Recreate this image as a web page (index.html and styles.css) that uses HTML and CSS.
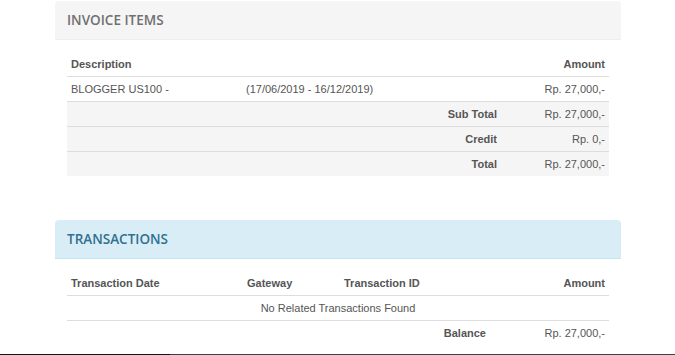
FILE: index.html
```html
<!DOCTYPE html>
<html lang="en">

<head>
    <meta charset="UTF-8">
    <meta name="viewport" content="width=device-width, initial-scale=1.0">
    <title>Invoice</title>

    <link rel="stylesheet" href="styles.css">

</head>

<body>
    <main class="invoice">
        <div class="panel">
            <div class="panel-heading">
                <h3 class="panel-title">Invoice Items</h3>
            </div>
            <div class="panel-body">
                <table class="items">
                    <colgroup>
                        <col class="col-desc">
                        <col class="col-period">
                        <col class="col-amount">
                    </colgroup>
                    <thead>
                        <tr>
                            <th>Description</th>
                            <th></th>
                            <th class="right">Amount</th>
                        </tr>
                    </thead>
                    <tbody>
                        <tr>
                            <td>BLOGGER US100 -</td>
                            <td>(17/06/2019 - 16/12/2019)</td>
                            <td class="right">Rp. 27,000,-</td>
                        </tr>
                        <tr class="summary">
                            <td colspan="2" class="right label">Sub Total</td>
                            <td class="right">Rp. 27,000,-</td>
                        </tr>
                        <tr class="summary">
                            <td colspan="2" class="right label">Credit</td>
                            <td class="right">Rp. 0,-</td>
                        </tr>
                        <tr class="summary">
                            <td colspan="2" class="right label">Total</td>
                            <td class="right">Rp. 27,000,-</td>
                        </tr>
                    </tbody>
                </table>
            </div>
        </div>

        <div class="panel panel-info">
            <div class="panel-heading">
                <h3 class="panel-title">Transactions</h3>
            </div>
            <div class="panel-body">
                <table class="transactions">
                    <colgroup>
                        <col class="col-date">
                        <col class="col-gateway">
                        <col class="col-txid">
                        <col class="col-amount">
                    </colgroup>
                    <thead>
                        <tr>
                            <th>Transaction Date</th>
                            <th>Gateway</th>
                            <th>Transaction ID</th>
                            <th class="right">Amount</th>
                        </tr>
                    </thead>
                    <tbody>
                        <tr>
                            <td colspan="4" class="center">No Related Transactions Found</td>
                        </tr>
                        <tr class="balance">
                            <td colspan="3" class="right label">Balance</td>
                            <td class="right">Rp. 27,000,-</td>
                        </tr>
                    </tbody>
                </table>
            </div>
        </div>
    </main>

    <div class="footer-edge"></div>

</body>

</html>
```

FILE: styles.css
```css
* {
    margin: 0;
    padding: 0;
    box-sizing: border-box;
}

:root {
    --text-color: #555555;
    --line-color: #dddddd;
    --muted-bg: #f5f5f5;
    --info-bg: #d9edf7;
    --info-border: #bce8f1;
    --info-text: #31708f;
}

body {
    background-color: #ffffff;
    color: var(--text-color);
    font-family: 'Liberation Sans', Arial, sans-serif;
    font-size: 11px;
    padding-top: 1px;
}

.invoice {
    width: 566px;
    margin-left: 55px;
    display: flex;
    flex-direction: column;
    gap: 32px;
}

.panel-heading {
    background-color: var(--muted-bg);
    border-bottom: 1px solid #eeeeee;
    border-radius: 4px 4px 0 0;
    height: 39px;
    padding: 0 12px;
    display: flex;
    align-items: center;
}

.panel-title {
    font-family: 'Open Sans', sans-serif;
    font-size: 13.5px;
    font-weight: 600;
    text-transform: uppercase;
    color: #707070;
}

.panel-info .panel-heading {
    background-color: var(--info-bg);
    border-bottom-color: var(--info-border);
}

.panel-info .panel-title {
    color: var(--info-text);
}

.panel-body {
    padding: 12px;
}

table {
    width: 100%;
    border-collapse: collapse;
    table-layout: fixed;
}

th,
td {
    height: 25px;
    padding: 0 4px;
    text-align: left;
    white-space: nowrap;
}

th {
    height: 24px;
    font-weight: bold;
    border-bottom: 1px solid var(--line-color);
}

tbody tr + tr td {
    border-top: 1px solid var(--line-color);
}

.right {
    text-align: right;
}

.center {
    text-align: center;
}

.label {
    font-weight: bold;
}

.summary td {
    background-color: var(--muted-bg);
}

.col-desc {
    width: 175px;
}

.col-period {
    width: 259px;
}

.col-date {
    width: 176px;
}

.col-gateway {
    width: 97px;
}

.col-txid {
    width: 150px;
}

.footer-edge {
    position: fixed;
    left: 0;
    right: 0;
    bottom: 0;
    height: 1px;
    background: linear-gradient(to right, #151515 0, #151515 170px, #3c4248 170px);
}
```
